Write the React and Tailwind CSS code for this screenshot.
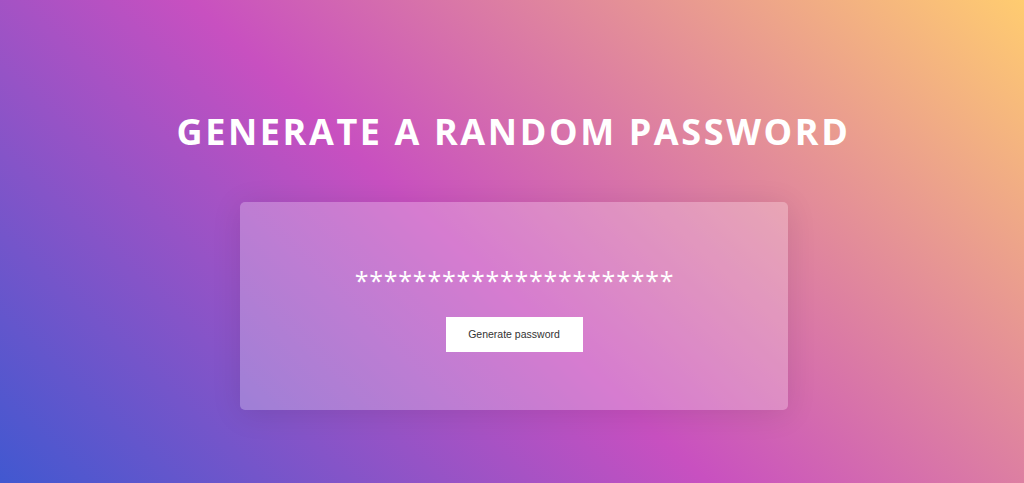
export default function App() {
  return (
    <div
      className="min-h-screen w-full overflow-hidden bg-[linear-gradient(43deg,#4158D0_0%,#C850C0_46%,#FFCC70_100%)] pt-[108px]"
      style={{ fontFamily: '"Open Sans", "Noto Sans", sans-serif' }}
    >
      <h1 className="pl-[3px] text-center text-[36px] font-bold leading-[48px] tracking-[2.6px] text-white">
        GENERATE A RANDOM PASSWORD
      </h1>

      <div className="mx-auto mt-[46px] flex h-[208px] w-[548px] translate-x-[2px] flex-col items-center rounded-[5px] bg-white/25 pt-[64px] shadow-[0_4px_30px_rgba(0,0,0,0.1)]">
        <p className="pl-[1px] text-[25px] leading-[28px] tracking-[0.75px] text-white">
          **********************
        </p>
        <button
          onClick={() => console.log('generate_click')}
          className="mt-[23px] h-[35px] w-[137px] bg-white text-[10.5px] text-[#333]"
          style={{ fontFamily: '"Liberation Sans", Arial, sans-serif' }}
        >
          Generate password
        </button>
      </div>
    </div>
  );
}
